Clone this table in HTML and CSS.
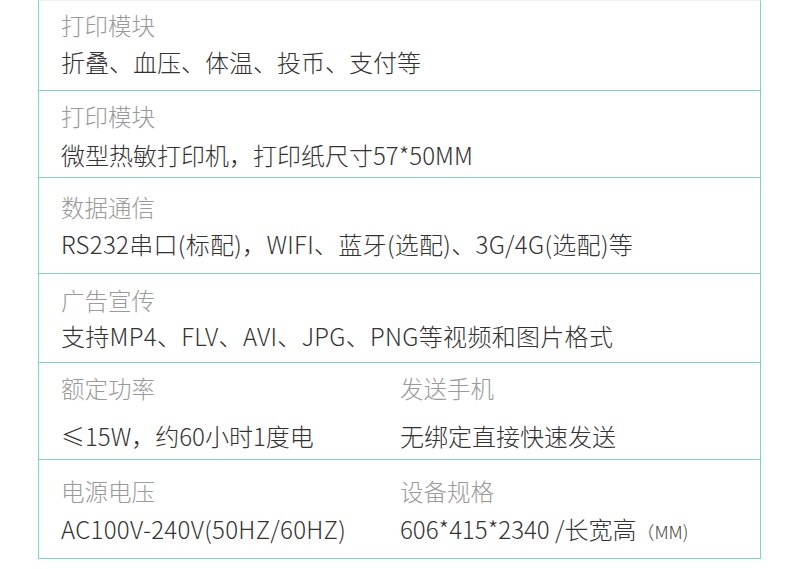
FILE: index.html
```html
<!DOCTYPE html>
<html lang="zh-CN">
<head>
    <meta charset="UTF-8">
    <meta name="viewport" content="width=device-width, initial-scale=1.0">
    <title>产品参数</title>
    <link rel="stylesheet" href="styles.css">
</head>
<body>
    <div class="spec-table">
        <div class="spec-row row-1">
            <div class="spec-cell">
                <div class="spec-label">打印模块</div>
                <div class="spec-value">折叠、血压、体温、投币、支付等</div>
            </div>
        </div>
        <div class="spec-row row-2">
            <div class="spec-cell">
                <div class="spec-label">打印模块</div>
                <div class="spec-value">微型热敏打印机，打印纸尺寸57*50MM</div>
            </div>
        </div>
        <div class="spec-row row-3">
            <div class="spec-cell">
                <div class="spec-label">数据通信</div>
                <div class="spec-value wide">RS232串口(标配)，WIFI、蓝牙(选配)、3G/4G(选配)等</div>
            </div>
        </div>
        <div class="spec-row row-4">
            <div class="spec-cell">
                <div class="spec-label">广告宣传</div>
                <div class="spec-value wide">支持MP4、FLV、AVI、JPG、PNG等视频和图片格式</div>
            </div>
        </div>
        <div class="spec-row split row-5">
            <div class="spec-cell">
                <div class="spec-label">额定功率</div>
                <div class="spec-value">≤15W，约60小时1度电</div>
            </div>
            <div class="spec-cell">
                <div class="spec-label">发送手机</div>
                <div class="spec-value">无绑定直接快速发送</div>
            </div>
        </div>
        <div class="spec-row split row-6">
            <div class="spec-cell">
                <div class="spec-label">电源电压</div>
                <div class="spec-value wide">AC100V-240V(50HZ/60HZ)</div>
            </div>
            <div class="spec-cell">
                <div class="spec-label">设备规格</div>
                <div class="spec-value">606*415*2340 /长宽高<span class="unit">（MM)</span></div>
            </div>
        </div>
    </div>
</body>
</html>
```

FILE: styles.css
```css
body {
    margin: 0;
    background-color: #fff;
    font-family: "Noto Sans CJK SC", "Noto Sans", sans-serif;
}
.spec-table {
    width: 723px;
    box-sizing: border-box;
    margin-left: 38px;
    border-left: 1px solid #80d2cc;
    border-right: 1px solid #80d2cc;
    border-top: 1px solid #f0f0f0;
}
.spec-row {
    display: flex;
    padding: 10px 0 10px 22px;
    border-bottom: 1px solid #80d2cc;
}
.spec-row.split {
    display: grid;
    grid-template-columns: 339px 1fr;
}
.spec-cell {
    display: flex;
    flex-direction: column;
    gap: 7px;
}
.spec-label {
    font-size: 23.5px;
    font-weight: 300;
    line-height: 30px;
    color: #9a9a9a;
}
.spec-value {
    font-size: 24px;
    font-weight: 300;
    line-height: 30px;
    color: #333;
}
.spec-value.wide {
    letter-spacing: 0.3px;
}
.unit {
    font-size: 18px;
    color: #444;
}
/* rows are not all the same height in the original */
.row-1 { padding-top: 9px; padding-bottom: 13px; }
.row-2 { padding-top: 10px; padding-bottom: 7px; }
.row-2 .spec-cell { gap: 9px; }
.row-3 { padding-top: 14px; padding-bottom: 14px; }
.row-4 { padding-top: 11px; padding-bottom: 11px; }
.row-4 .spec-cell { gap: 6px; }
.row-5 { padding-top: 10px; padding-bottom: 8px; }
.row-5 .spec-cell { gap: 18px; }
.row-6 { padding-top: 16px; padding-bottom: 12px; }
.row-6 .spec-cell { gap: 8px; }
```
